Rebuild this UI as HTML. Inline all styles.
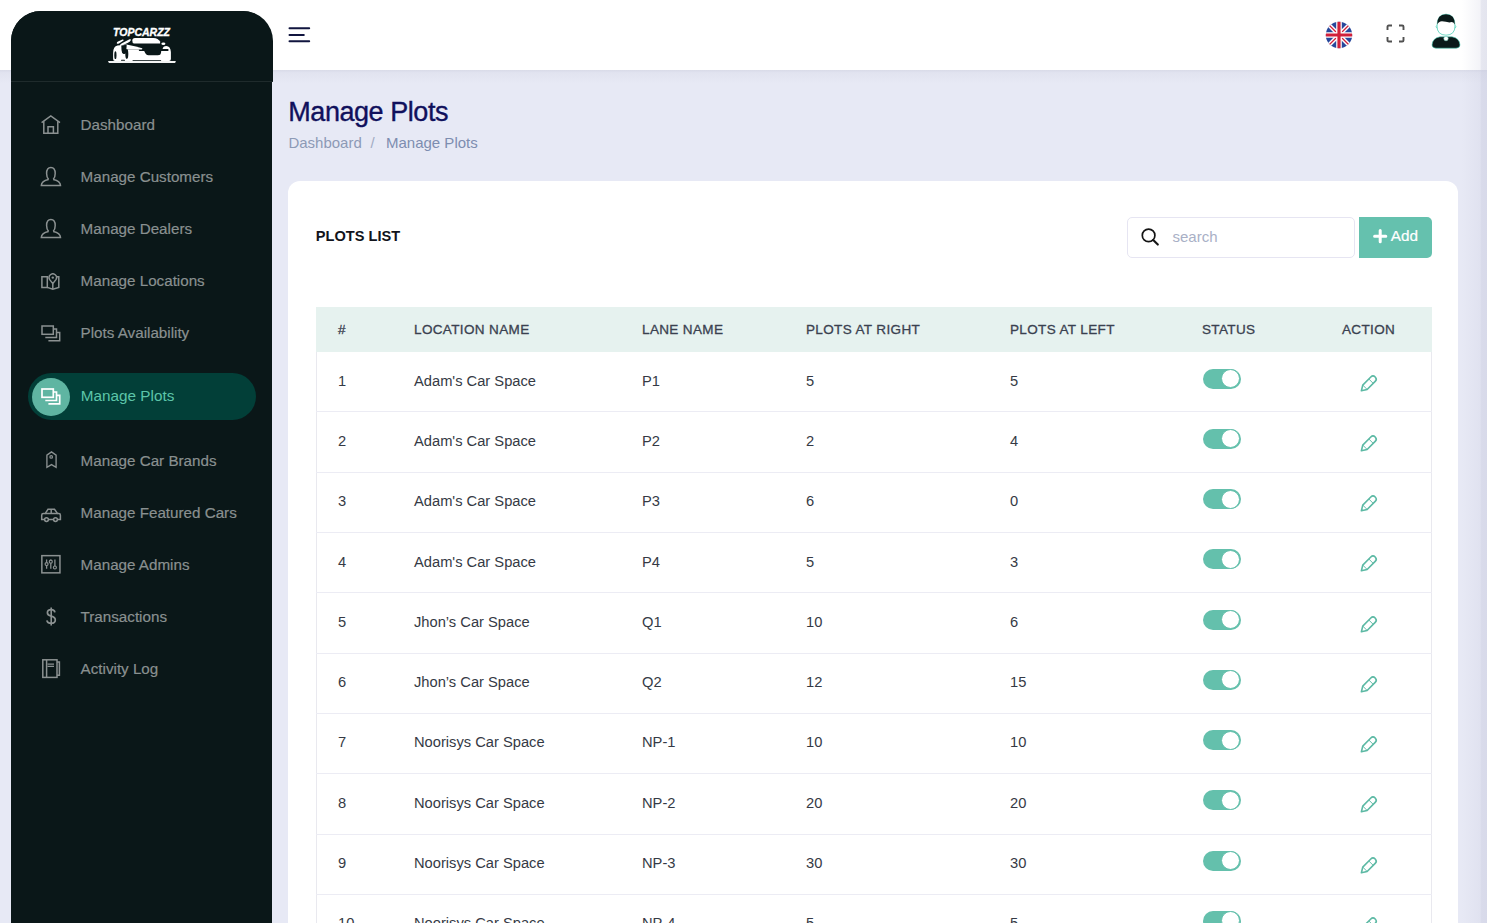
<!DOCTYPE html>
<html>
<head>
<meta charset="utf-8">
<style>
*{box-sizing:border-box;margin:0;padding:0}
html,body{width:1487px;height:923px;overflow:hidden}
body{font-family:"Liberation Sans",sans-serif;background:#e7e9f5;position:relative}
.t{position:absolute;line-height:1;white-space:nowrap}
.a{position:absolute;display:block}
</style>
</head>
<body>
<div class="a" style="left:0;top:0;width:1487px;height:70px;background:#fff"></div>
<div class="a" style="left:0;top:70px;width:1487px;height:14px;background:linear-gradient(to bottom,rgba(205,207,222,.55),rgba(205,207,222,.22) 20%,rgba(205,207,222,0))"></div>
<div class="a" style="left:1462px;top:0;width:25px;height:923px;background:linear-gradient(to right,rgba(200,202,222,0) 0%,rgba(200,202,222,.22) 72%,rgba(200,202,222,.45) 78%,rgba(200,202,222,.5) 100%)"></div>
<div class="a" style="left:11px;top:11px;width:261.3px;height:940px;background:#0a1718;border-radius:30px 30px 0 0"></div>
<div class="a" style="left:11px;top:11px;width:262px;height:70px;background:#0a1718;border-radius:30px 30px 0 0"></div>
<div class="a" style="left:11px;top:80.5px;width:262px;height:1px;background:#1f2b2c"></div>
<svg class="a" style="left:104px;top:22px" width="76" height="44" viewBox="0 0 76 44">
<text x="9" y="13.6" font-family="Liberation Sans" font-weight="bold" font-style="italic" font-size="11.8" fill="#fff" stroke="#fff" stroke-width="0.35" textLength="57" lengthAdjust="spacingAndGlyphs">TOPCARZZ</text>
<g fill="#fff">
<path d="M28.3 18.7 Q28.3 15.9 31 15.9 L49.5 15.9 Q54.2 16.2 56.1 19.6 L56.1 21.5 L30 21.5 Q28.3 21.5 28.3 18.7 Z"/>
<ellipse cx="59.4" cy="21.7" rx="2" ry="1.3"/>
<path d="M12.8 21.6 Q12.5 20.3 14 19.6 L18.5 17.6 Q19.8 17.3 19.6 18.6 L15 21.4 Q13.4 22.2 12.8 21.6 Z"/>
<path d="M16 23.6 Q15.8 22.5 17.5 21.5 L25.5 17.3 Q27.2 16.8 26.9 18 Q26.5 19.5 24 20.8 L18 23.5 Q16.3 24.3 16 23.6 Z"/>
<path d="M22.5 22.4 Q31 24 38.2 26.2 Q38.8 27.1 37.6 27.5 L22.5 27.5 Z"/>
<path d="M9.1 31 Q9.2 24.4 13.5 23.6 L22.5 22.6 L23 27.5 L34.9 27.5 Q34.6 29 35.6 29 L40.2 29 Q41.8 33.2 44.5 33.2 L54 33.2 Q56.8 33.2 57 31 L57.2 29 L63.8 29 Q64.6 28.9 64.6 28 Q64.6 27.1 63.8 27 L58.6 27 Q59 24.1 62.3 24 Q66.5 24.2 66.9 30 L66.9 37 Q66.9 38.9 65 38.9 L11 38.9 Q9.1 38.9 9.1 37 Z"/>
<path d="M4.2 39 L71.7 39 Q72.2 40.2 70.8 41.1 L5.2 41.1 Q3.8 40.2 4.2 39 Z" opacity="0.95"/>
</g>
<g fill="#0a1718">
<path d="M17.3 23.6 L22.6 22.8 L22.2 30.5 Q21.5 32.4 19.5 32 Q17.6 31.2 17.5 28 Z"/>
<ellipse cx="11.4" cy="33.2" rx="1.1" ry="3.9"/>
<ellipse cx="22.8" cy="32" rx="1.5" ry="4.9"/>
<rect x="17" y="37.7" width="4" height="1" rx="0.5"/>
<rect x="28.6" y="38" width="28.5" height="0.8"/>
</g>
</svg>
<svg class="a" style="left:40px;top:114px" width="22" height="22" viewBox="0 0 22 22" fill="none" stroke="#8b9191" stroke-width="1.5" stroke-linejoin="miter"><path d="M1.6 8.6 L10.8 2 L20 8.6"/><path d="M3.8 7.2 V19.2 H17.8 V7.2"/><path d="M8 19.2 V12.8 H13.4 V19.2"/></svg>
<div class="t" style="left:80.60px;top:116.83px;font-size:15.2px;color:#899090;-webkit-text-stroke:0.2px #899090">Dashboard</div>
<svg class="a" style="left:40px;top:166px" width="22" height="22" viewBox="0 0 22 22" fill="none" stroke="#8b9191" stroke-width="1.5" stroke-linejoin="miter"><path d="M8.6 13.4 Q6.6 11.6 6.6 7.6 Q6.6 1.6 10.9 1.6 Q15.2 1.6 15.2 7.6 Q15.2 11.6 13.2 13.4"/><path d="M8.6 13.4 Q1.4 14.8 1.3 19.6 H20.5 Q20.4 14.8 13.2 13.4"/></svg>
<div class="t" style="left:80.60px;top:168.93px;font-size:15.2px;color:#899090;-webkit-text-stroke:0.2px #899090">Manage Customers</div>
<svg class="a" style="left:40px;top:218px" width="22" height="22" viewBox="0 0 22 22" fill="none" stroke="#8b9191" stroke-width="1.5" stroke-linejoin="miter"><path d="M8.6 13.4 Q6.6 11.6 6.6 7.6 Q6.6 1.6 10.9 1.6 Q15.2 1.6 15.2 7.6 Q15.2 11.6 13.2 13.4"/><path d="M8.6 13.4 Q1.4 14.8 1.3 19.6 H20.5 Q20.4 14.8 13.2 13.4"/></svg>
<div class="t" style="left:80.60px;top:221.03px;font-size:15.2px;color:#899090;-webkit-text-stroke:0.2px #899090">Manage Dealers</div>
<svg class="a" style="left:40px;top:273px" width="22" height="22" viewBox="0 0 22 22" fill="none" stroke="#8b9191" stroke-width="1.5" stroke-linejoin="miter"><path d="M1.9 3.8 H7.3 V14.4 H1.9 Z"/><path d="M16.2 3.8 H18.8 V14.4 L12.8 16.3 L7.3 14.4"/><path d="M12.8 10.6 L9.7 6.6 A3.7 3.7 0 1 1 15.9 6.6 Z"/><path d="M12.8 10.6 V16"/><circle cx="12.8" cy="4.6" r="1.2" fill="#8b9191" stroke="none"/></svg>
<div class="t" style="left:80.60px;top:273.13px;font-size:15.2px;color:#899090;-webkit-text-stroke:0.2px #899090">Manage Locations</div>
<svg class="a" style="left:40px;top:324px" width="22" height="22" viewBox="0 0 22 22" fill="none" stroke="#8b9191" stroke-width="1.5" stroke-linejoin="miter"><rect x="2" y="2" width="11.3" height="8.3"/><path d="M5.3 13.5 H16.5 V5 H13.3"/><path d="M8.4 16.8 H19.7 V8.4 H16.5"/></svg>
<div class="t" style="left:80.60px;top:325.33px;font-size:15.2px;color:#899090;-webkit-text-stroke:0.2px #899090">Plots Availability</div>
<svg class="a" style="left:40px;top:448px" width="22" height="22" viewBox="0 0 22 22" fill="none" stroke="#8b9191" stroke-width="1.5" stroke-linejoin="miter"><path d="M6.9 7.1 L11.5 3.9 L16.1 7.1 V19.3 L11.5 16.6 L6.9 19.3 Z" stroke-width="1.35"/><circle cx="11.2" cy="8.9" r="1.3" stroke-width="1.2"/></svg>
<div class="t" style="left:80.60px;top:452.53px;font-size:15.2px;color:#899090;-webkit-text-stroke:0.2px #899090">Manage Car Brands</div>
<svg class="a" style="left:40px;top:504px" width="22" height="22" viewBox="0 0 22 22" fill="none" stroke="#8b9191" stroke-width="1.5" stroke-linejoin="miter"><path d="M4.4 15.6 H1.7 V11.2 Q1.7 9.6 3.4 9.6 H5.2 L8 5.3 H14.5 L17.6 9.6 H18.8 Q20.4 9.6 20.4 11.2 V15.6 H17.6 M13.5 15.6 H8.5"/><path d="M5.2 9.6 H17.6 M11.2 5.3 V9.6"/><circle cx="6.5" cy="15.6" r="1.9"/><circle cx="15.5" cy="15.6" r="1.9"/></svg>
<div class="t" style="left:80.60px;top:504.63px;font-size:15.2px;color:#899090;-webkit-text-stroke:0.2px #899090">Manage Featured Cars</div>
<svg class="a" style="left:40px;top:553px" width="22" height="22" viewBox="0 0 22 22" fill="none" stroke="#8b9191" stroke-width="1.5" stroke-linejoin="miter"><rect x="1.85" y="2.65" width="18.1" height="17.2"/><path d="M6.6 6.4 V15.8 M10.8 6.4 V15.8 M14.9 6.4 V15.8" stroke-width="1.3"/><circle cx="6.6" cy="11.1" r="1.5" fill="#0a1718" stroke-width="1.2"/><circle cx="10.8" cy="8.7" r="1.5" fill="#0a1718" stroke-width="1.2"/><circle cx="14.9" cy="14.5" r="1.5" fill="#0a1718" stroke-width="1.2"/></svg>
<div class="t" style="left:80.60px;top:556.83px;font-size:15.2px;color:#899090;-webkit-text-stroke:0.2px #899090">Manage Admins</div>
<svg class="a" style="left:40px;top:604.5px" width="22" height="22" viewBox="0 0 22 22" fill="none" stroke="#8b9191" stroke-width="1.5" stroke-linejoin="miter"><path d="M14.9 7.4 Q14.6 4.6 11.2 4.6 Q7.4 4.6 7.4 7.7 Q7.4 10.2 11.2 11.1 Q15.3 12.1 15.3 14.9 Q15.3 18.2 11.2 18.2 Q7.2 18.2 6.9 15.3" stroke-width="1.7"/><path d="M11.2 2.4 V20.4" stroke-width="1.6"/></svg>
<div class="t" style="left:80.60px;top:608.83px;font-size:15.2px;color:#899090;-webkit-text-stroke:0.2px #899090">Transactions</div>
<svg class="a" style="left:40px;top:657px" width="22" height="22" viewBox="0 0 22 22" fill="none" stroke="#8b9191" stroke-width="1.5" stroke-linejoin="miter"><rect x="2.8" y="2.8" width="14.2" height="17.6"/><path d="M6.6 2.8 V20.4"/><path d="M7.5 7.1 H14 M7.5 9.4 H14" stroke-width="1.1"/><path d="M17 5 H19.4 V18.2 H17"/></svg>
<div class="t" style="left:80.60px;top:660.83px;font-size:15.2px;color:#899090;-webkit-text-stroke:0.2px #899090">Activity Log</div>
<div class="a" style="left:28px;top:373px;width:227.5px;height:47px;border-radius:24px;background:#023f38"></div>
<div class="a" style="left:31.5px;top:377.5px;width:38.5px;height:38.5px;border-radius:50%;background:#5fb5a2"></div>
<svg class="a" style="left:40px;top:386.5px" width="22" height="22" viewBox="0 0 22 22" fill="none" stroke="#ffffff" stroke-width="1.7" stroke-linejoin="miter"><rect x="2" y="2" width="11.3" height="8.3"/><path d="M5.3 13.5 H16.5 V5 H13.3"/><path d="M8.4 16.8 H19.7 V8.4 H16.5"/></svg>
<div class="t" style="left:80.80px;top:388.05px;font-size:15.3px;color:#5cc5a9;">Manage Plots</div>
<svg class="a" style="left:288px;top:26px" width="23" height="18" viewBox="0 0 23 18" fill="none" stroke="#11153f" stroke-width="2.0" stroke-linejoin="miter"><path d="M1.5 2.2 H21.2 M1.5 8.9 H15.8 M1.5 15.2 H21.2" stroke-linecap="round"/></svg>
<svg class="a" style="left:1325px;top:21px" width="28" height="28" viewBox="0 0 28 28">
<defs><clipPath id="fc"><circle cx="14" cy="14" r="13.2"/></clipPath></defs>
<g clip-path="url(#fc)">
<rect width="28" height="28" fill="#27479b"/>
<path d="M0 0 L28 28 M28 0 L0 28" stroke="#fff" stroke-width="4.2"/>
<path d="M0 0 L28 28 M28 0 L0 28" stroke="#d1203a" stroke-width="1.3"/>
<path d="M14 0 V28 M0 14 H28" stroke="#fff" stroke-width="5.6"/>
<path d="M14 0 V28 M0 14 H28" stroke="#d1203a" stroke-width="3.2"/>
</g></svg>
<svg class="a" style="left:1385.8px;top:23.8px" width="20" height="20" viewBox="0 0 20 20" fill="none" stroke="#505050" stroke-width="1.9" stroke-linejoin="miter"><path d="M1.5 6 V2.8 Q1.5 1.5 2.8 1.5 H6 M13 1.5 H16.2 Q17.5 1.5 17.5 2.8 V6 M17.5 13 V16.2 Q17.5 17.5 16.2 17.5 H13 M6 17.5 H2.8 Q1.5 17.5 1.5 16.2 V13"/></svg>
<svg class="a" style="left:1429px;top:11.5px" width="34" height="38" viewBox="0 0 34 38">
<path d="M3 33 Q3.5 26 11 24.8 L23 24.8 Q30.5 26 31 33 Q31 36 27 36.2 L7 36.2 Q3 36 3 33 Z" fill="#0b1a1a" stroke="#4fd1b8" stroke-width="0.6"/>
<circle cx="17" cy="26.6" r="2.2" fill="#fff" stroke="#7fdcc8" stroke-width="0.5"/>
<path d="M8 14 Q8 2.2 17 2.2 Q26 2.2 26 14 Q26 23 17 23.2 Q8 23 8 14 Z" fill="#fff" stroke="#4fd1b8" stroke-width="0.8"/>
<path d="M8.2 12.5 Q8 2.2 17 2.2 Q26 2.2 25.8 12.5 Q24 9 20.5 10.5 Q17 9.4 13 9.2 Q9.5 9.5 8.2 12.5 Z" fill="#0b1a1a"/>
<path d="M7.6 13.5 Q6.4 14.5 7.8 16.2 M26.4 13.5 Q27.6 14.5 26.2 16.2" fill="none" stroke="#4fd1b8" stroke-width="0.7"/>
</svg>
<div class="t" style="left:288.30px;top:98.94px;font-size:27px;color:#10105c;letter-spacing:-0.45px;-webkit-text-stroke:0.35px #10105c">Manage Plots</div>
<div class="t" style="left:288.40px;top:134.50px;font-size:15px;color:#8d9ab6;">Dashboard</div>
<div class="t" style="left:370.50px;top:134.50px;font-size:15px;color:#a2abc3;">/</div>
<div class="t" style="left:386.00px;top:134.50px;font-size:15px;color:#7d8db0;">Manage Plots</div>
<div class="a" style="left:288px;top:180.5px;width:1170.4px;height:800px;background:#fff;border-radius:12px"></div>
<div class="t" style="left:315.80px;top:229.24px;font-size:14.6px;color:#12141c;font-weight:bold">PLOTS LIST</div>
<div class="a" style="left:1127px;top:217px;width:228px;height:41px;border:1px solid #e6e5f2;border-radius:5px"></div>
<svg class="a" style="left:1140px;top:227px" width="20" height="20" viewBox="0 0 20 20" fill="none" stroke="#141414" stroke-width="1.5" stroke-linejoin="miter"><circle cx="8.6" cy="8.4" r="6.3" stroke-width="1.7"/><path d="M13.2 13 L17.8 17.6" stroke-width="2.1" stroke-linecap="round"/></svg>
<div class="t" style="left:1172.50px;top:228.50px;font-size:15px;color:#a9b0c6;">search</div>
<div class="a" style="left:1359px;top:216.5px;width:72.5px;height:41.3px;background:#65c1ae;border-radius:0 5px 5px 0"></div>
<svg class="a" style="left:1372px;top:228px" width="16" height="16" viewBox="0 0 16 16" fill="none" stroke="#ffffff" stroke-width="3.0" stroke-linejoin="miter"><path d="M8.2 2.6 V13.8 M2.6 8.2 H13.8" stroke-linecap="round"/></svg>
<div class="t" style="left:1390.80px;top:228.05px;font-size:15.3px;color:#ffffff;-webkit-text-stroke:0.2px #fff">Add</div>
<div class="a" style="left:316px;top:307px;width:1115.5px;height:44.60000000000002px;background:#e6f2ef"></div>
<div class="a" style="left:316px;top:351.6px;width:1px;height:700px;background:#e9e9ef"></div>
<div class="a" style="left:1430.5px;top:351.6px;width:1px;height:700px;background:#e9e9ef"></div>
<div class="t" style="left:338.00px;top:322.57px;font-size:13.5px;color:#3a4150;letter-spacing:0.37px;-webkit-text-stroke:0.3px #3a4150">#</div>
<div class="t" style="left:414.00px;top:322.57px;font-size:13.5px;color:#3a4150;letter-spacing:0.37px;-webkit-text-stroke:0.3px #3a4150">LOCATION NAME</div>
<div class="t" style="left:642.00px;top:322.57px;font-size:13.5px;color:#3a4150;letter-spacing:0.37px;-webkit-text-stroke:0.3px #3a4150">LANE NAME</div>
<div class="t" style="left:806.00px;top:322.57px;font-size:13.5px;color:#3a4150;letter-spacing:0.37px;-webkit-text-stroke:0.3px #3a4150">PLOTS AT RIGHT</div>
<div class="t" style="left:1010.00px;top:322.57px;font-size:13.5px;color:#3a4150;letter-spacing:0.37px;-webkit-text-stroke:0.3px #3a4150">PLOTS AT LEFT</div>
<div class="t" style="left:1202.00px;top:322.57px;font-size:13.5px;color:#3a4150;letter-spacing:0.37px;-webkit-text-stroke:0.3px #3a4150">STATUS</div>
<div class="t" style="left:1342.00px;top:322.57px;font-size:13.5px;color:#3a4150;letter-spacing:0.37px;-webkit-text-stroke:0.3px #3a4150">ACTION</div>
<div class="t" style="left:338.00px;top:373.75px;font-size:14.7px;color:#353a45;">1</div>
<div class="t" style="left:414.00px;top:373.75px;font-size:14.7px;color:#353a45;">Adam's Car Space</div>
<div class="t" style="left:642.00px;top:373.75px;font-size:14.7px;color:#353a45;">P1</div>
<div class="t" style="left:806.00px;top:373.75px;font-size:14.7px;color:#353a45;">5</div>
<div class="t" style="left:1010.00px;top:373.75px;font-size:14.7px;color:#353a45;">5</div>
<div class="a" style="left:316px;top:411.40px;width:1115.5px;height:1px;background:#ececf4"></div>
<div class="a" style="left:1203px;top:368.70px;width:37.5px;height:20px;border-radius:10px;background:#64c0ac"></div>
<div class="a" style="left:1221px;top:369.20px;width:19px;height:19px;border-radius:50%;background:#fff;border:1px solid #64c0ac"></div>
<svg class="a" style="left:1358px;top:372.50px" width="22" height="22" viewBox="0 0 22 22" fill="none" stroke="#5cb9a4" stroke-width="1.6" stroke-linejoin="round"><g transform="translate(3.4 17.8) rotate(-45)"><path d="M0 0 L5 -3.1 L16.4 -3.1 A3.1 3.1 0 0 1 16.4 3.1 L5 3.1 Z"/><path d="M5 -3.1 L5 3.1 M13.6 -3.1 L13.6 3.1" stroke-width="0.9"/></g></svg>
<div class="t" style="left:338.00px;top:434.00px;font-size:14.7px;color:#353a45;">2</div>
<div class="t" style="left:414.00px;top:434.00px;font-size:14.7px;color:#353a45;">Adam's Car Space</div>
<div class="t" style="left:642.00px;top:434.00px;font-size:14.7px;color:#353a45;">P2</div>
<div class="t" style="left:806.00px;top:434.00px;font-size:14.7px;color:#353a45;">2</div>
<div class="t" style="left:1010.00px;top:434.00px;font-size:14.7px;color:#353a45;">4</div>
<div class="a" style="left:316px;top:471.70px;width:1115.5px;height:1px;background:#ececf4"></div>
<div class="a" style="left:1203px;top:428.95px;width:37.5px;height:20px;border-radius:10px;background:#64c0ac"></div>
<div class="a" style="left:1221px;top:429.45px;width:19px;height:19px;border-radius:50%;background:#fff;border:1px solid #64c0ac"></div>
<svg class="a" style="left:1358px;top:432.75px" width="22" height="22" viewBox="0 0 22 22" fill="none" stroke="#5cb9a4" stroke-width="1.6" stroke-linejoin="round"><g transform="translate(3.4 17.8) rotate(-45)"><path d="M0 0 L5 -3.1 L16.4 -3.1 A3.1 3.1 0 0 1 16.4 3.1 L5 3.1 Z"/><path d="M5 -3.1 L5 3.1 M13.6 -3.1 L13.6 3.1" stroke-width="0.9"/></g></svg>
<div class="t" style="left:338.00px;top:494.25px;font-size:14.7px;color:#353a45;">3</div>
<div class="t" style="left:414.00px;top:494.25px;font-size:14.7px;color:#353a45;">Adam's Car Space</div>
<div class="t" style="left:642.00px;top:494.25px;font-size:14.7px;color:#353a45;">P3</div>
<div class="t" style="left:806.00px;top:494.25px;font-size:14.7px;color:#353a45;">6</div>
<div class="t" style="left:1010.00px;top:494.25px;font-size:14.7px;color:#353a45;">0</div>
<div class="a" style="left:316px;top:532.00px;width:1115.5px;height:1px;background:#ececf4"></div>
<div class="a" style="left:1203px;top:489.20px;width:37.5px;height:20px;border-radius:10px;background:#64c0ac"></div>
<div class="a" style="left:1221px;top:489.70px;width:19px;height:19px;border-radius:50%;background:#fff;border:1px solid #64c0ac"></div>
<svg class="a" style="left:1358px;top:493.00px" width="22" height="22" viewBox="0 0 22 22" fill="none" stroke="#5cb9a4" stroke-width="1.6" stroke-linejoin="round"><g transform="translate(3.4 17.8) rotate(-45)"><path d="M0 0 L5 -3.1 L16.4 -3.1 A3.1 3.1 0 0 1 16.4 3.1 L5 3.1 Z"/><path d="M5 -3.1 L5 3.1 M13.6 -3.1 L13.6 3.1" stroke-width="0.9"/></g></svg>
<div class="t" style="left:338.00px;top:554.50px;font-size:14.7px;color:#353a45;">4</div>
<div class="t" style="left:414.00px;top:554.50px;font-size:14.7px;color:#353a45;">Adam's Car Space</div>
<div class="t" style="left:642.00px;top:554.50px;font-size:14.7px;color:#353a45;">P4</div>
<div class="t" style="left:806.00px;top:554.50px;font-size:14.7px;color:#353a45;">5</div>
<div class="t" style="left:1010.00px;top:554.50px;font-size:14.7px;color:#353a45;">3</div>
<div class="a" style="left:316px;top:592.30px;width:1115.5px;height:1px;background:#ececf4"></div>
<div class="a" style="left:1203px;top:549.45px;width:37.5px;height:20px;border-radius:10px;background:#64c0ac"></div>
<div class="a" style="left:1221px;top:549.95px;width:19px;height:19px;border-radius:50%;background:#fff;border:1px solid #64c0ac"></div>
<svg class="a" style="left:1358px;top:553.25px" width="22" height="22" viewBox="0 0 22 22" fill="none" stroke="#5cb9a4" stroke-width="1.6" stroke-linejoin="round"><g transform="translate(3.4 17.8) rotate(-45)"><path d="M0 0 L5 -3.1 L16.4 -3.1 A3.1 3.1 0 0 1 16.4 3.1 L5 3.1 Z"/><path d="M5 -3.1 L5 3.1 M13.6 -3.1 L13.6 3.1" stroke-width="0.9"/></g></svg>
<div class="t" style="left:338.00px;top:614.75px;font-size:14.7px;color:#353a45;">5</div>
<div class="t" style="left:414.00px;top:614.75px;font-size:14.7px;color:#353a45;">Jhon’s Car Space</div>
<div class="t" style="left:642.00px;top:614.75px;font-size:14.7px;color:#353a45;">Q1</div>
<div class="t" style="left:806.00px;top:614.75px;font-size:14.7px;color:#353a45;">10</div>
<div class="t" style="left:1010.00px;top:614.75px;font-size:14.7px;color:#353a45;">6</div>
<div class="a" style="left:316px;top:652.60px;width:1115.5px;height:1px;background:#ececf4"></div>
<div class="a" style="left:1203px;top:609.70px;width:37.5px;height:20px;border-radius:10px;background:#64c0ac"></div>
<div class="a" style="left:1221px;top:610.20px;width:19px;height:19px;border-radius:50%;background:#fff;border:1px solid #64c0ac"></div>
<svg class="a" style="left:1358px;top:613.50px" width="22" height="22" viewBox="0 0 22 22" fill="none" stroke="#5cb9a4" stroke-width="1.6" stroke-linejoin="round"><g transform="translate(3.4 17.8) rotate(-45)"><path d="M0 0 L5 -3.1 L16.4 -3.1 A3.1 3.1 0 0 1 16.4 3.1 L5 3.1 Z"/><path d="M5 -3.1 L5 3.1 M13.6 -3.1 L13.6 3.1" stroke-width="0.9"/></g></svg>
<div class="t" style="left:338.00px;top:675.00px;font-size:14.7px;color:#353a45;">6</div>
<div class="t" style="left:414.00px;top:675.00px;font-size:14.7px;color:#353a45;">Jhon’s Car Space</div>
<div class="t" style="left:642.00px;top:675.00px;font-size:14.7px;color:#353a45;">Q2</div>
<div class="t" style="left:806.00px;top:675.00px;font-size:14.7px;color:#353a45;">12</div>
<div class="t" style="left:1010.00px;top:675.00px;font-size:14.7px;color:#353a45;">15</div>
<div class="a" style="left:316px;top:712.90px;width:1115.5px;height:1px;background:#ececf4"></div>
<div class="a" style="left:1203px;top:669.95px;width:37.5px;height:20px;border-radius:10px;background:#64c0ac"></div>
<div class="a" style="left:1221px;top:670.45px;width:19px;height:19px;border-radius:50%;background:#fff;border:1px solid #64c0ac"></div>
<svg class="a" style="left:1358px;top:673.75px" width="22" height="22" viewBox="0 0 22 22" fill="none" stroke="#5cb9a4" stroke-width="1.6" stroke-linejoin="round"><g transform="translate(3.4 17.8) rotate(-45)"><path d="M0 0 L5 -3.1 L16.4 -3.1 A3.1 3.1 0 0 1 16.4 3.1 L5 3.1 Z"/><path d="M5 -3.1 L5 3.1 M13.6 -3.1 L13.6 3.1" stroke-width="0.9"/></g></svg>
<div class="t" style="left:338.00px;top:735.25px;font-size:14.7px;color:#353a45;">7</div>
<div class="t" style="left:414.00px;top:735.25px;font-size:14.7px;color:#353a45;">Noorisys Car Space</div>
<div class="t" style="left:642.00px;top:735.25px;font-size:14.7px;color:#353a45;">NP-1</div>
<div class="t" style="left:806.00px;top:735.25px;font-size:14.7px;color:#353a45;">10</div>
<div class="t" style="left:1010.00px;top:735.25px;font-size:14.7px;color:#353a45;">10</div>
<div class="a" style="left:316px;top:773.20px;width:1115.5px;height:1px;background:#ececf4"></div>
<div class="a" style="left:1203px;top:730.20px;width:37.5px;height:20px;border-radius:10px;background:#64c0ac"></div>
<div class="a" style="left:1221px;top:730.70px;width:19px;height:19px;border-radius:50%;background:#fff;border:1px solid #64c0ac"></div>
<svg class="a" style="left:1358px;top:734.00px" width="22" height="22" viewBox="0 0 22 22" fill="none" stroke="#5cb9a4" stroke-width="1.6" stroke-linejoin="round"><g transform="translate(3.4 17.8) rotate(-45)"><path d="M0 0 L5 -3.1 L16.4 -3.1 A3.1 3.1 0 0 1 16.4 3.1 L5 3.1 Z"/><path d="M5 -3.1 L5 3.1 M13.6 -3.1 L13.6 3.1" stroke-width="0.9"/></g></svg>
<div class="t" style="left:338.00px;top:795.50px;font-size:14.7px;color:#353a45;">8</div>
<div class="t" style="left:414.00px;top:795.50px;font-size:14.7px;color:#353a45;">Noorisys Car Space</div>
<div class="t" style="left:642.00px;top:795.50px;font-size:14.7px;color:#353a45;">NP-2</div>
<div class="t" style="left:806.00px;top:795.50px;font-size:14.7px;color:#353a45;">20</div>
<div class="t" style="left:1010.00px;top:795.50px;font-size:14.7px;color:#353a45;">20</div>
<div class="a" style="left:316px;top:833.50px;width:1115.5px;height:1px;background:#ececf4"></div>
<div class="a" style="left:1203px;top:790.45px;width:37.5px;height:20px;border-radius:10px;background:#64c0ac"></div>
<div class="a" style="left:1221px;top:790.95px;width:19px;height:19px;border-radius:50%;background:#fff;border:1px solid #64c0ac"></div>
<svg class="a" style="left:1358px;top:794.25px" width="22" height="22" viewBox="0 0 22 22" fill="none" stroke="#5cb9a4" stroke-width="1.6" stroke-linejoin="round"><g transform="translate(3.4 17.8) rotate(-45)"><path d="M0 0 L5 -3.1 L16.4 -3.1 A3.1 3.1 0 0 1 16.4 3.1 L5 3.1 Z"/><path d="M5 -3.1 L5 3.1 M13.6 -3.1 L13.6 3.1" stroke-width="0.9"/></g></svg>
<div class="t" style="left:338.00px;top:855.75px;font-size:14.7px;color:#353a45;">9</div>
<div class="t" style="left:414.00px;top:855.75px;font-size:14.7px;color:#353a45;">Noorisys Car Space</div>
<div class="t" style="left:642.00px;top:855.75px;font-size:14.7px;color:#353a45;">NP-3</div>
<div class="t" style="left:806.00px;top:855.75px;font-size:14.7px;color:#353a45;">30</div>
<div class="t" style="left:1010.00px;top:855.75px;font-size:14.7px;color:#353a45;">30</div>
<div class="a" style="left:316px;top:893.80px;width:1115.5px;height:1px;background:#ececf4"></div>
<div class="a" style="left:1203px;top:850.70px;width:37.5px;height:20px;border-radius:10px;background:#64c0ac"></div>
<div class="a" style="left:1221px;top:851.20px;width:19px;height:19px;border-radius:50%;background:#fff;border:1px solid #64c0ac"></div>
<svg class="a" style="left:1358px;top:854.50px" width="22" height="22" viewBox="0 0 22 22" fill="none" stroke="#5cb9a4" stroke-width="1.6" stroke-linejoin="round"><g transform="translate(3.4 17.8) rotate(-45)"><path d="M0 0 L5 -3.1 L16.4 -3.1 A3.1 3.1 0 0 1 16.4 3.1 L5 3.1 Z"/><path d="M5 -3.1 L5 3.1 M13.6 -3.1 L13.6 3.1" stroke-width="0.9"/></g></svg>
<div class="t" style="left:338.00px;top:916.00px;font-size:14.7px;color:#353a45;">10</div>
<div class="t" style="left:414.00px;top:916.00px;font-size:14.7px;color:#353a45;">Noorisys Car Space</div>
<div class="t" style="left:642.00px;top:916.00px;font-size:14.7px;color:#353a45;">NP-4</div>
<div class="t" style="left:806.00px;top:916.00px;font-size:14.7px;color:#353a45;">5</div>
<div class="t" style="left:1010.00px;top:916.00px;font-size:14.7px;color:#353a45;">5</div>
<div class="a" style="left:316px;top:954.10px;width:1115.5px;height:1px;background:#ececf4"></div>
<div class="a" style="left:1203px;top:910.95px;width:37.5px;height:20px;border-radius:10px;background:#64c0ac"></div>
<div class="a" style="left:1221px;top:911.45px;width:19px;height:19px;border-radius:50%;background:#fff;border:1px solid #64c0ac"></div>
<svg class="a" style="left:1358px;top:914.75px" width="22" height="22" viewBox="0 0 22 22" fill="none" stroke="#5cb9a4" stroke-width="1.6" stroke-linejoin="round"><g transform="translate(3.4 17.8) rotate(-45)"><path d="M0 0 L5 -3.1 L16.4 -3.1 A3.1 3.1 0 0 1 16.4 3.1 L5 3.1 Z"/><path d="M5 -3.1 L5 3.1 M13.6 -3.1 L13.6 3.1" stroke-width="0.9"/></g></svg>
</body>
</html>
